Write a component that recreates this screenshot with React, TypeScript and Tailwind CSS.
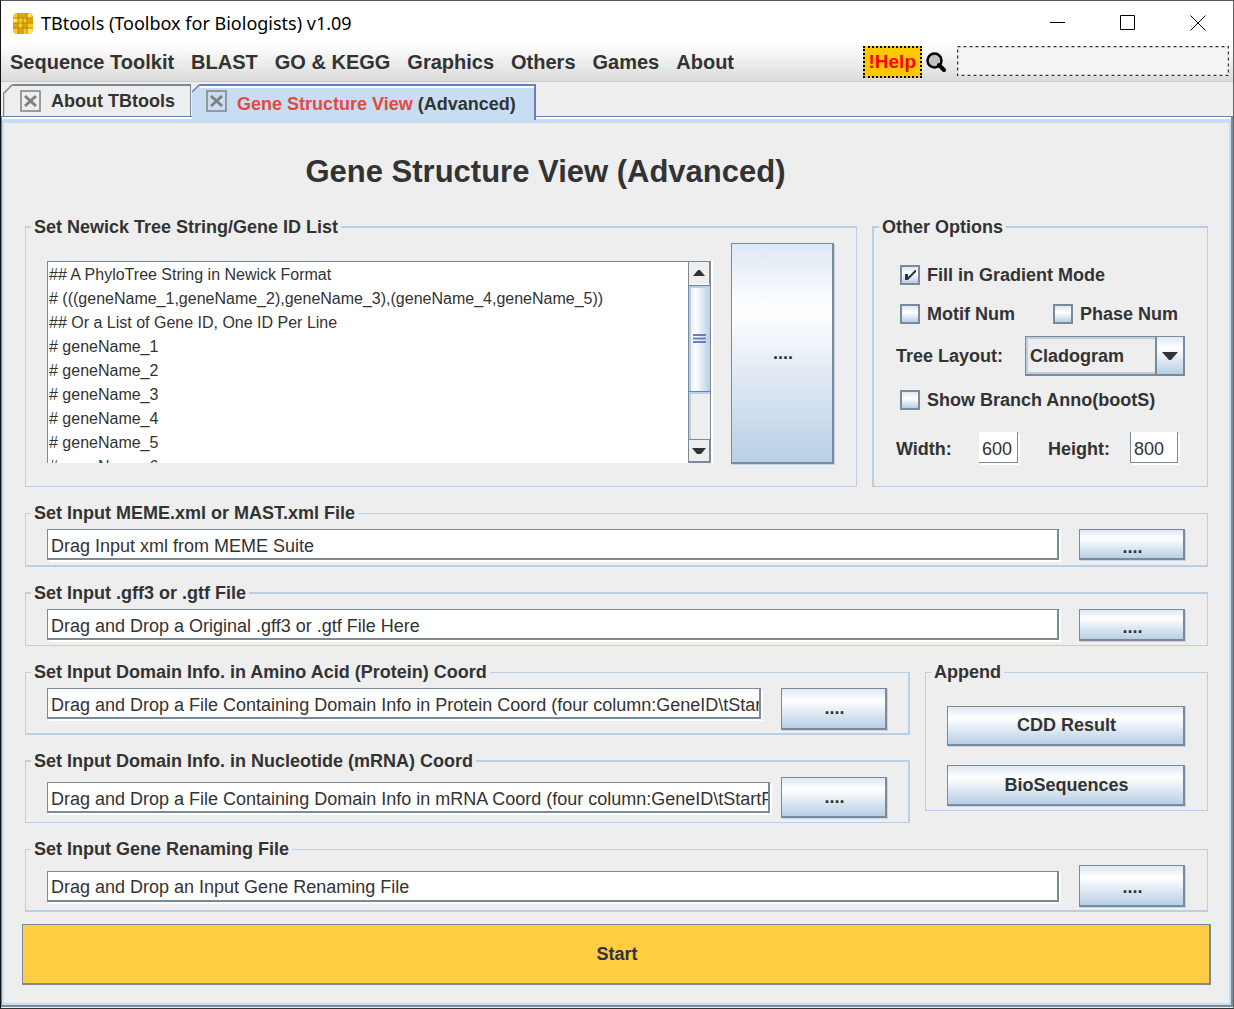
import { useState } from 'react';
import type { ReactNode } from 'react';

const menus = ['Sequence Toolkit', 'BLAST', 'GO & KEGG', 'Graphics', 'Others', 'Games', 'About'];

const treeHint = [
  '## A PhyloTree String in Newick Format',
  '# (((geneName_1,geneName_2),geneName_3),(geneName_4,geneName_5))',
  '## Or a List of Gene ID, One ID Per Line',
  '# geneName_1',
  '# geneName_2',
  '# geneName_3',
  '# geneName_4',
  '# geneName_5',
  '# geneName_6',
].join('\n');

function MetalButton({ children, className = '', label }: { children: ReactNode; className?: string; label?: string }) {
  return (
    <button
      type="button"
      aria-label={label}
      className={`shrink-0 border border-r-2 border-b-2 border-[#7a8a99] bg-linear-to-b from-[#dfe8f4] via-white via-30% to-[#b8cfe5] pl-0.5 font-bold shadow-[1px_1px_0_#c4d6e8] ${className}`}
    >
      {children}
    </button>
  );
}

function Group({ title, children, className = '' }: { title: string; children: ReactNode; className?: string }) {
  return (
    <fieldset className={`min-w-0 border border-[#b8cfe5] ${className}`}>
      <legend className="ml-[5px] px-[3px] font-bold leading-5">{title}</legend>
      {children}
    </fieldset>
  );
}

function FileRow({ title, value, border = '', row, button }: { title: string; value: string; border?: string; row: string; button: string }) {
  return (
    <Group title={title} className={border}>
      <div className={`flex pt-1.5 pl-[21px] ${row}`}>
        <input
          type="text"
          aria-label={title}
          defaultValue={value}
          className="h-[31px] min-w-0 flex-1 border border-r-2 border-b-2 border-[#7a8a99] bg-white pt-1 pl-[3px] shadow-[2px_2px_0_#fff] outline-none"
        />
        <MetalButton label={`Browse: ${title}`} className={`w-[106px] ${button}`}>....</MetalButton>
      </div>
    </Group>
  );
}

function Check({ label, defaultChecked = false, className = '' }: { label: string; defaultChecked?: boolean; className?: string }) {
  return (
    <label className={`flex h-6 items-center gap-[7px] font-bold ${className}`}>
      <span className="relative flex">
        <input
          type="checkbox"
          defaultChecked={defaultChecked}
          className="peer size-5 appearance-none border-2 border-[#7a8a99] bg-linear-to-b from-[#dfe8f4] via-white via-40% to-[#b8cfe5]"
        />
        <svg viewBox="0 0 20 20" className="pointer-events-none absolute inset-0 hidden size-5 peer-checked:block">
          <path d="M5 9h3v3l7-7h1v2l-8 8H5z" fill="#333" />
        </svg>
      </span>
      {label}
    </label>
  );
}

function CloseBox() {
  return (
    <button type="button" aria-label="Close tab" className="flex">
      <svg width="21" height="22" viewBox="0 0 21 22" fill="none" stroke="#808080">
        <rect x="1" y="1" width="19" height="20" strokeWidth="1.5" />
        <path d="M5 6l11 10M16 6L5 16" strokeWidth="3" />
      </svg>
    </button>
  );
}

function Logo() {
  return (
    <svg width="20" height="21" viewBox="0 0 20 21" className="shrink-0">
      <rect width="20" height="21" rx="4" fill="#f6c927" />
      <path d="M5 0h9v5H5zM0 10h5v5H0zM10 10h4v5h-4zM5 15h5v6H5zM14 5h6v5h-6z" fill="#e5a50a" />
      <path d="M0 5h5v5H0zM14 15h6v3l-3 3h-3zM14 1h4v4h-4z" fill="#fbe26a" />
      <path d="M5 0v21M10 5v16M14 0v21M0 5h20M0 10h20M0 15h20" stroke="#b98708" fill="none" />
    </svg>
  );
}

function TitleBar() {
  return (
    <header className="flex h-11 items-center bg-white pl-3">
      <Logo />
      <h1 className="ml-2 flex-1 font-['Noto_Sans','Open_Sans',sans-serif] text-[18px] leading-6 text-black">
        TBtools (Toolbox for Biologists) v1.09
      </h1>
      <div className="flex">
        <button type="button" aria-label="Minimize" className="flex w-[70px] justify-center">
          <svg width="16" height="16" stroke="#000"><path d="M0 7.5h15" /></svg>
        </button>
        <button type="button" aria-label="Maximize" className="flex w-[70px] justify-center">
          <svg width="16" height="16" stroke="#000" fill="none"><path d="M.5.5h14v14H.5z" /></svg>
        </button>
        <button type="button" aria-label="Close" className="flex w-[70px] justify-center">
          <svg width="16" height="16" stroke="#000"><path d="M.5.5l15 15M15.5.5l-15 15" /></svg>
        </button>
      </div>
    </header>
  );
}

function MenuBar() {
  return (
    <nav className="flex h-[37px] items-start border-b border-[#ccc] bg-linear-to-b from-white to-[#dadada] pl-[9px] pr-1 text-[20px] font-bold">
      <div className="flex flex-1 gap-[17px]">
        {menus.map((m) => (
          <button key={m} type="button" className="h-[34px] whitespace-nowrap">{m}</button>
        ))}
      </div>
      <button type="button" className="mt-px h-8 border-2 border-dotted border-black bg-[#ffc800] px-1 text-[19px] leading-7 text-[#f00]">!Help</button>
      <label htmlFor="search" aria-label="Search" className="mt-[7px] ml-1 mr-[11px]">
        <svg width="20" height="20" viewBox="0 0 20 20">
          <circle cx="8.500" cy="8.500" r="7" fill="#c0c0c0" stroke="#000" strokeWidth="2.500" />
          <path d="M13 13l5 5" stroke="#000" strokeWidth="4" strokeLinecap="round" />
        </svg>
      </label>
      <div className="relative mt-px h-[30px] w-[272px] bg-[#f4f4f4]">
        <input id="search" type="text" className="size-full bg-transparent px-2 text-[18px] font-normal outline-none" />
        <svg className="pointer-events-none absolute inset-0 size-full">
          <rect x="0.500" y="0.500" width="271" height="29" fill="none" stroke="#333" strokeWidth="1.5" strokeDasharray="3 3" />
        </svg>
      </div>
    </nav>
  );
}

function Tabs({ active, onChange }: { active: number; onChange: (i: number) => void }) {
  return (
    <div className="flex items-start pl-0.5 pt-0.5 font-bold" role="tablist">
      <div className="flex h-8">
        <svg width="10" height="32" fill="none"><path d="M.5 32V9.500L9 1h1" stroke="#7a8a99" strokeWidth="1.500" /></svg>
        <div className="flex items-center gap-2.5 border-t-2 border-r border-t-[#7a8a99] border-r-[#7a8a99] pl-[7px] pr-[15px]">
          <CloseBox />
          <button type="button" role="tab" aria-selected={active === 0} onClick={() => onChange(0)}>About TBtools</button>
        </div>
      </div>
      <div className="relative z-10 -mb-1 ml-px flex h-9">
        <svg width="8" height="36"><path d="M0 36V8l7-7h1v35z" fill="#c8ddf2" /><path d="M0 8l7-7h1" fill="none" stroke="#6382bf" strokeWidth="1.500" /></svg>
        <div className="flex items-start gap-2.5 border-t-2 border-r-2 border-[#6382bf] bg-[#c8ddf2] pl-1.5 pr-[18px] pt-1 shadow-[inset_0_2px_0_#fff]">
          <CloseBox />
          <button type="button" role="tab" aria-selected={active === 1} onClick={() => onChange(1)} className="mt-0.5 leading-6">
            <span className="text-[#e04b41]">Gene Structure View</span> (Advanced)
          </button>
        </div>
      </div>
    </div>
  );
}

function ScrollBar() {
  return (
    <div className="flex w-[23px] shrink-0 flex-col border-x border-[#7a8a99] bg-[#eee]" aria-hidden="true">
      <div className="flex h-[23px] items-center justify-center border-r border-b border-white border-r-[#7a8a99]">
        <svg width="12" height="6"><path d="M0 6l5-6h2l5 6z" fill="#333" /></svg>
      </div>
      <div className="flex h-[107px] items-center justify-center border-y border-[#6382bf] bg-linear-to-r from-[#dfe8f4] via-white via-30% to-[#b8cfe5] shadow-[inset_2px_2px_0_#b8cfe5]">
        <svg width="15" height="10"><path d="M1 1h13M1 4.500h13M1 8h13" stroke="#6382bf" strokeWidth="2" /></svg>
      </div>
      <div className="flex-1 shadow-[inset_2px_2px_0_#b8cfe5]" />
      <div className="flex h-6 items-center justify-center border-t border-r border-b-2 border-[#7a8a99]">
        <svg width="14" height="6"><path d="M0 0h14l-5 6H5z" fill="#333" /></svg>
      </div>
    </div>
  );
}

function TreeInput() {
  return (
    <Group title="Set Newick Tree String/Gene ID List" className="flex-1 border-t-2">
      <div className="flex pt-1.5 pl-[21px] pr-[22px] pb-[22px]">
        <div className="mt-[18px] flex h-[202px] min-w-0 flex-1 border-t border-l border-[#7a8a99] bg-white shadow-[2px_0_0_#fff]">
          <textarea
            aria-label="Newick tree string or gene ID list"
            defaultValue={treeHint}
            className="min-w-0 flex-1 resize-none overflow-hidden pt-px pl-px text-[16px] leading-6 outline-none"
          />
          <ScrollBar />
        </div>
        <MetalButton label="Browse tree file" className="ml-5 h-[221px] w-[103px]">....</MetalButton>
      </div>
    </Group>
  );
}

function Options() {
  const size = 'h-[31px] border-r border-b border-[#7a8a99] bg-white pt-1 pl-[3px] shadow-[2px_2px_0_#fff] outline-none';
  return (
    <Group title="Other Options" className="w-[336px] shrink-0 border-t-2 border-l-2">
      <div className="flex flex-col pt-[26px] pl-[22px] pb-5">
        <Check label="Fill in Gradient Mode" defaultChecked className="pl-1" />
        <div className="mt-[15px] flex pl-1">
          <Check label="Motif Num" className="w-[153px]" />
          <Check label="Phase Num" />
        </div>
        <div className="mt-2.5 flex items-center">
          <label htmlFor="layout" className="w-[129px] font-bold">Tree Layout:</label>
          <div className="relative">
            <select
              id="layout"
              className="h-10 w-40 appearance-none border border-r-2 border-b-2 border-[#7a8a99] bg-[#eee] pt-0.5 pl-1 font-bold shadow-[inset_2px_2px_0_#b8cfe5,inset_0_-2px_0_#b8cfe5] outline-none"
            >
              <option>Cladogram</option>
              <option>Phylogram</option>
            </select>
            <span className="pointer-events-none absolute inset-y-0 right-0 flex w-[30px] items-center justify-center border border-x-2 border-b-2 border-[#7a8a99] bg-linear-to-b from-[#dfe8f4] via-white via-30% to-[#b8cfe5]">
              <svg width="16" height="8"><path d="M0 0h16L9 8H7z" fill="#333" /></svg>
            </span>
          </div>
        </div>
        <Check label="Show Branch Anno(bootS)" className="mt-3 pl-1" />
        <div className="mt-5 flex items-center font-bold">
          <label htmlFor="width" className="w-[83px] pt-1">Width:</label>
          <input id="width" type="text" defaultValue="600" className={`w-[39px] font-normal ${size}`} />
          <label htmlFor="height" className="ml-[30px] w-[82px] pt-1">Height:</label>
          <input id="height" type="text" defaultValue="800" className={`w-12 border-l font-normal ${size}`} />
        </div>
      </div>
    </Group>
  );
}

export default function App() {
  const [tab, setTab] = useState(1);

  return (
    <div className="flex min-h-screen flex-col border border-t-[#555] border-r-[#666] border-b-[#333] border-l-[#111] bg-[#eee] font-['Liberation_Sans',Arial,sans-serif] text-[18px] text-[#333]">
      <TitleBar />
      <MenuBar />
      <Tabs active={tab} onChange={setTab} />

      <main className="mb-px flex flex-1 flex-col border-t border-l border-r-2 border-b-2 border-[#6382bf] border-r-[#7a8a99] border-b-[#7a8a99] bg-white pt-0.5">
        <div className="flex-1 border-x-2 border-t-4 border-b-2 border-[#c8ddf2] bg-[#eee] px-[21px] pt-[29px] pb-4">
          <h2 className="pr-[142px] text-center text-[31px] font-bold leading-10">Gene Structure View (Advanced)</h2>

          <div className="mt-[25px] flex flex-col gap-4">
            <div className="flex gap-[15px]">
              <TreeInput />
              <Options />
            </div>

            <FileRow title="Set Input MEME.xml or MAST.xml File" value="Drag Input xml from MEME Suite" border="border-b-2" row="items-end gap-5 pr-[22px] pb-[5px]" button="h-[31px] pt-1" />
            <FileRow title="Set Input .gff3 or .gtf File" value="Drag and Drop a Original .gff3 or .gtf File Here" border="border-t-2" row="gap-5 pr-[22px] pb-1" button="h-8 pt-1" />

            <div className="flex items-start gap-[15px]">
              <div className="flex min-w-0 flex-1 flex-col gap-4">
                <FileRow
                  title="Set Input Domain Info. in Amino Acid (Protein) Coord"
                  value="Drag and Drop a File Containing Domain Info in Protein Coord (four column:GeneID\tStartPos\tEndPos\tDomain)"
                  border="border-r-2 border-b-2"
                  row="items-start gap-5 pr-[21px] pb-[3px]"
                  button="h-[42px]"
                />
                <FileRow
                  title="Set Input Domain Info. in Nucleotide (mRNA) Coord"
                  value="Drag and Drop a File Containing Domain Info in mRNA Coord (four column:GeneID\tStartPos\tEndPos\tDomain)"
                  border="border-t-2 border-r-2"
                  row="items-center gap-[11px] pr-[21px] pb-1"
                  button="h-[41px]"
                />
              </div>
              <Group title="Append" className="w-[283px] shrink-0">
                <div className="flex flex-col gap-[19px] pt-6 pl-[21px] pr-[22px] pb-1">
                  <MetalButton className="h-10">CDD Result</MetalButton>
                  <MetalButton className="h-[41px]">BioSequences</MetalButton>
                </div>
              </Group>
            </div>

            <FileRow title="Set Input Gene Renaming File" value="Drag and Drop an Input Gene Renaming File" border="border-b-2" row="items-center gap-5 pr-[22px] pb-[3px]" button="h-[42px] pt-1" />
          </div>

          <div className="-mx-[3px] mt-3">
            <button type="button" className="h-[61px] w-full border border-r-2 border-b-2 border-[#7a8a99] bg-[#ffcc42] pl-0.5 font-bold">Start</button>
          </div>
        </div>
      </main>
    </div>
  );
}
